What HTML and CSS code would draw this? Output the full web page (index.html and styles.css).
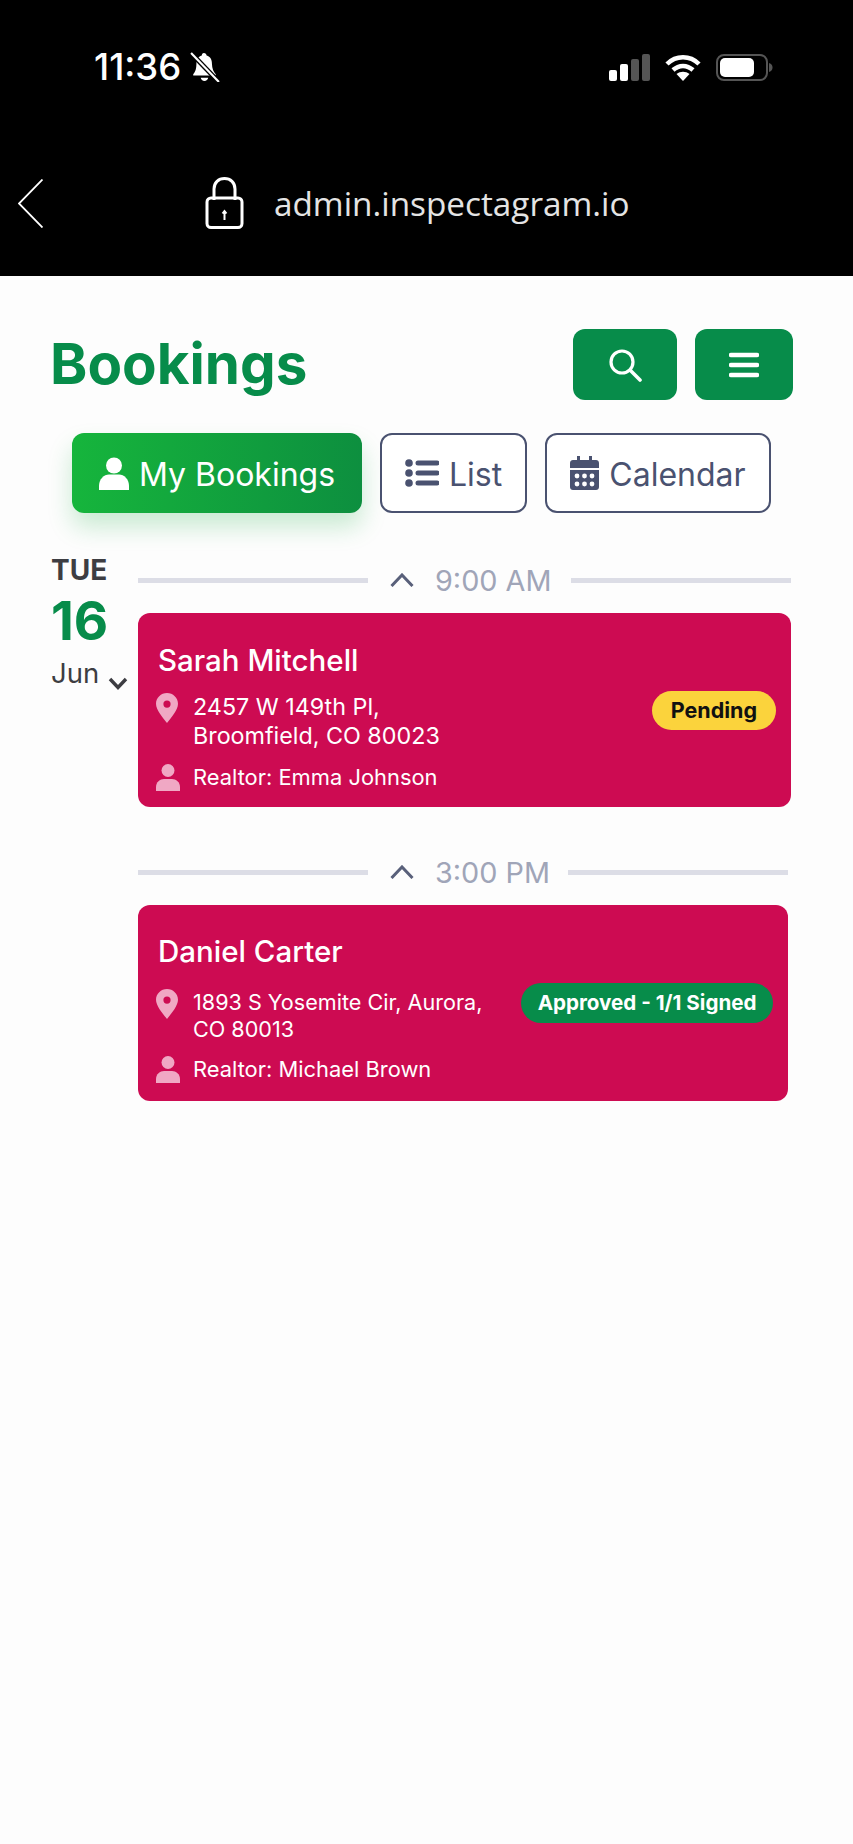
FILE: index.html
```html
<!DOCTYPE html>
<html lang="en">
<head>
    <meta charset="UTF-8">
    <meta name="viewport" content="width=device-width, initial-scale=1.0">
    <title>Bookings</title>
    <link rel="stylesheet" href="styles.css">
</head>
<body>

    <header class="phone-top">
        <div class="status-bar">
            <div class="status-left">
                <span class="clock">11:36</span>
                <svg class="bell" viewBox="0 0 28 28">
                    <path fill="#fff" d="M13 1c1.500 0 2.300 1 2.500 2.300 3.600 1 5 4 5 8 0 4 1.500 7.500 3.500 9.500v1.200H3v-1.200c2-2 3-5.500 3-9.500 0-4 1.400-7 5-8C11.200 2 11.500 1 13 1zM10 24h7c-.3 1.800-1.700 3-3.500 3S10.300 25.800 10 24z"/>
                    <path stroke="#000" stroke-width="4.500" d="M1 1l26 27"/>
                    <path stroke="#fff" stroke-width="2" d="M1 1l26 27"/>
                </svg>
            </div>
            <div class="status-right">
                <svg class="signal" viewBox="0 0 42 27">
                    <rect x="0" y="16" width="8" height="11" rx="2" fill="#fff"/>
                    <rect x="11" y="10" width="8" height="17" rx="2" fill="#fff"/>
                    <rect x="22" y="5" width="8" height="22" rx="2" fill="#555"/>
                    <rect x="33" y="0" width="8" height="27" rx="2" fill="#555"/>
                </svg>
                <svg class="wifi" viewBox="0 0 36 27">
                    <path fill="none" stroke="#fff" stroke-width="4.500" d="M2 10c9-9 23-9 32 0M8 16c6-5.500 14-5.500 20 0"/>
                    <path fill="#fff" d="M18 27l-6.500-7c4-3 9-3 13 0z"/>
                </svg>
                <svg class="battery" viewBox="0 0 57 27">
                    <rect x="1" y="1" width="50" height="25" rx="7" fill="none" stroke="#555" stroke-width="2"/>
                    <rect x="4" y="4" width="34" height="19" rx="5" fill="#fff"/>
                    <path d="M53 9c2.500.5 3.500 2.500 3.500 4.500S55.500 17.500 53 18z" fill="#555"/>
                </svg>
            </div>
        </div>
        <div class="address-bar">
            <svg class="back" viewBox="0 0 25 49">
                <path fill="none" stroke="#fff" stroke-width="1.800" d="M24.500 .5L1 24.500l23.500 24"/>
            </svg>
            <svg class="lock" viewBox="0 0 39 52">
                <path fill="none" stroke="#fff" stroke-width="3" d="M9 23V12C9 5.500 13.500 1.500 19.500 1.500S30 5.500 30 12v11"/>
                <rect x="2" y="21" width="35" height="29.500" rx="4" fill="none" stroke="#fff" stroke-width="3"/>
                <path fill="none" stroke="#fff" stroke-width="2" d="M19.500 43v-9M17.500 36.500l2-2.500 2 2.500"/>
            </svg>
            <span class="url">admin.inspectagram.io</span>
        </div>
    </header>

    <main class="page">
        <div class="title-row">
            <h1>Bookings</h1>
            <div class="title-actions">
                <button class="icon-btn search-btn" type="button">
                    <svg viewBox="0 0 34 34" width="34" height="34">
                        <circle cx="14" cy="14" r="11" fill="none" stroke="#fff" stroke-width="3.200"/>
                        <path d="M22.500 22.500L32 32" stroke="#fff" stroke-width="3.600" stroke-linecap="round"/>
                    </svg>
                </button>
                <button class="icon-btn menu-btn" type="button">
                    <svg viewBox="0 0 30 26" width="30" height="26">
                        <path d="M2 3h26M2 13h26M2 23h26" stroke="#fff" stroke-width="4.400" stroke-linecap="round"/>
                    </svg>
                </button>
            </div>
        </div>

        <div class="tabs">
            <button class="tab tab-active" type="button">
                <svg viewBox="0 0 30 33" width="30" height="33">
                    <circle cx="15" cy="8.500" r="8" fill="#fff"/>
                    <path fill="#fff" d="M0 33v-4c0-7 5-11.500 10-11.500h10c5 0 10 4.500 10 11.500v4z"/>
                </svg>
                My Bookings
            </button>
            <button class="tab tab-list" type="button">
                <svg viewBox="0 0 34 28" width="34" height="28">
                    <circle cx="4" cy="4" r="3.800" fill="#4a5270"/>
                    <circle cx="4" cy="14" r="3.800" fill="#4a5270"/>
                    <circle cx="4" cy="24" r="3.800" fill="#4a5270"/>
                    <path d="M13 4h19M13 14h19M13 24h19" stroke="#4a5270" stroke-width="5" stroke-linecap="round"/>
                </svg>
                List
            </button>
            <button class="tab tab-calendar" type="button">
                <svg viewBox="0 0 29 34" width="29" height="34">
                    <path fill="#4a5270" d="M7 0h3v4h9V0h3v4h4c1.700 0 3 1.300 3 3v5H0V7c0-1.700 1.300-3 3-3h4zM0 14h29v17c0 1.700-1.300 3-3 3H3c-1.700 0-3-1.300-3-3z"/>
                    <g fill="#fff">
                        <circle cx="7" cy="20" r="2.400"/><circle cx="14.500" cy="20" r="2.400"/><circle cx="22" cy="20" r="2.400"/>
                        <circle cx="7" cy="28" r="2.400"/><circle cx="14.500" cy="28" r="2.400"/><circle cx="22" cy="28" r="2.400"/>
                    </g>
                </svg>
                Calendar
            </button>
        </div>

        <div class="schedule">
            <div class="day">
                <div class="day-name">TUE</div>
                <div class="day-num">16</div>
                <div class="day-month">
                    Jun
                    <svg viewBox="0 0 20 13" width="20" height="13">
                        <path d="M2 2l8 8.500L18 2" fill="none" stroke="#3d3d42" stroke-width="3.400"/>
                    </svg>
                </div>
            </div>

            <div class="slots">
                <section class="slot">
                    <div class="slot-time">
                        <span class="slot-line slot-line-left"></span>
                        <svg viewBox="0 0 24 14" width="24" height="14">
                            <path d="M1.500 13L12 2l10.500 11" fill="none" stroke="#59607a" stroke-width="3"/>
                        </svg>
                        <span class="slot-label">9:00 AM</span>
                        <span class="slot-line"></span>
                    </div>
                    <div class="card">
                        <div class="card-info">
                            <h2>Sarah Mitchell</h2>
                            <div class="info-row address">
                                <svg class="pin" viewBox="0 0 22 30" width="22" height="30">
                                    <path fill-rule="evenodd" fill="#f0a8c4" d="M11 0c6 0 11 4.800 11 10.800C22 17 15 25 11 30 7 25 0 17 0 10.800 0 4.800 5 0 11 0zm0 7.500a3.600 3.600 0 1 0 0 7.200 3.600 3.600 0 0 0 0-7.200z"/>
                                </svg>
                                <span>2457 W 149th Pl,<br>Broomfield, CO 80023</span>
                            </div>
                            <div class="info-row realtor">
                                <svg class="person" viewBox="0 0 24 27" width="24" height="27">
                                    <circle cx="12" cy="6.500" r="6.500" fill="#f0a8c4"/>
                                    <path fill="#f0a8c4" d="M0 27v-4c0-5 4-8 8-8h8c4 0 8 3 8 8v4z"/>
                                </svg>
                                <span>Realtor: Emma Johnson</span>
                            </div>
                        </div>
                        <span class="pill pill-pending">Pending</span>
                    </div>
                </section>

                <section class="slot slot-second">
                    <div class="slot-time">
                        <span class="slot-line slot-line-left"></span>
                        <svg viewBox="0 0 24 14" width="24" height="14">
                            <path d="M1.500 13L12 2l10.500 11" fill="none" stroke="#59607a" stroke-width="3"/>
                        </svg>
                        <span class="slot-label">3:00 PM</span>
                        <span class="slot-line"></span>
                    </div>
                    <div class="card">
                        <div class="card-info">
                            <h2>Daniel Carter</h2>
                            <div class="info-row address">
                                <svg class="pin" viewBox="0 0 22 30" width="22" height="30">
                                    <path fill-rule="evenodd" fill="#f0a8c4" d="M11 0c6 0 11 4.800 11 10.800C22 17 15 25 11 30 7 25 0 17 0 10.800 0 4.800 5 0 11 0zm0 7.500a3.600 3.600 0 1 0 0 7.200 3.600 3.600 0 0 0 0-7.200z"/>
                                </svg>
                                <span>1893 S Yosemite Cir, Aurora,<br>CO 80013</span>
                            </div>
                            <div class="info-row realtor">
                                <svg class="person" viewBox="0 0 24 27" width="24" height="27">
                                    <circle cx="12" cy="6.500" r="6.500" fill="#f0a8c4"/>
                                    <path fill="#f0a8c4" d="M0 27v-4c0-5 4-8 8-8h8c4 0 8 3 8 8v4z"/>
                                </svg>
                                <span>Realtor: Michael Brown</span>
                            </div>
                        </div>
                        <span class="pill pill-approved">Approved - 1/1 Signed</span>
                    </div>
                </section>
            </div>
        </div>
    </main>

</body>
</html>
```

FILE: styles.css
```css
body {
    margin: 0;
    min-height: 100vh;
    background-color: #fdfdfd;
    font-family: 'Inter', 'Liberation Sans', sans-serif;
}

h1, h2 {
    margin: 0;
}

button {
    font-family: inherit;
    cursor: pointer;
}

/* black phone chrome */
.phone-top {
    background-color: #000;
    height: 276px;
    box-sizing: border-box;
    padding-top: 53px;
}

.status-bar {
    display: flex;
    justify-content: space-between;
    align-items: center;
    padding: 0 80px 0 94px;
    height: 28px;
}

.status-left,
.status-right {
    display: flex;
    align-items: center;
}

.clock {
    color: #fff;
    font-size: 36.5px;
    font-weight: 500;
}

.bell {
    width: 30px;
    height: 30px;
    margin-left: 9px;
}

.signal {
    width: 42px;
    height: 27px;
}

.wifi {
    width: 36px;
    height: 27px;
    margin-left: 14px;
}

.battery {
    width: 57px;
    height: 27px;
    margin-left: 15px;
}

.address-bar {
    display: flex;
    align-items: center;
    margin-top: 96px;
    padding-left: 18px;
    height: 52px;
}

.back {
    width: 25px;
    height: 49px;
}

.lock {
    width: 39px;
    height: 52px;
    margin-left: 162px;
}

.url {
    color: #e4e4e4;
    font-family: 'Open Sans', sans-serif;
    font-size: 33.3px;
    font-weight: 400;
    margin-left: 30px;
}

/* page */
.page {
    padding: 53px 62px 0 51px;
}

.title-row {
    display: flex;
    justify-content: space-between;
    align-items: center;
    height: 71px;
}

h1 {
    color: #078c4a;
    font-size: 56.5px;
    font-weight: 700;
    margin: -2px 0 0 -1px;
}

.title-actions {
    display: flex;
    gap: 18px;
    margin-right: -2px;
}

.icon-btn {
    display: flex;
    align-items: center;
    justify-content: center;
    height: 71px;
    border: 0;
    border-radius: 12px;
    background-color: #078c4a;
}

.search-btn {
    width: 104px;
}

.menu-btn {
    width: 98px;
}

.tabs {
    display: flex;
    gap: 18px;
    margin-top: 33px;
    padding-left: 21px;
}

.tab {
    display: flex;
    align-items: center;
    justify-content: center;
    gap: 10px;
    height: 80px;
    box-sizing: border-box;
    border: 2px solid #4a5270;
    border-radius: 12px;
    background-color: #fff;
    color: #4a5270;
    font-size: 32px;
    font-weight: 400;
    padding: 2px 0 0;
}

.tab svg {
    margin-top: -2px;
}

.tab-active {
    width: 290px;
    border: 0;
    background: linear-gradient(90deg, #16b53c, #0d8f3f);
    color: #fff;
    box-shadow: 0 14px 24px rgba(20, 170, 60, 0.22);
}

.tab-list {
    width: 147px;
}

.tab-calendar {
    width: 226px;
}

/* schedule */
.schedule {
    display: flex;
    margin-top: 47px;
}

.day {
    width: 87px;
    flex-shrink: 0;
}

.day-name {
    color: #3d3d42;
    font-size: 28px;
    font-weight: 700;
    line-height: 27px;
    margin-top: -3px;
}

.day-num {
    color: #078c4a;
    font-size: 53px;
    font-weight: 700;
    line-height: 50px;
    margin-top: 12px;
}

.day-month {
    display: flex;
    align-items: flex-end;
    gap: 9px;
    color: #3d3d42;
    font-size: 27.5px;
    line-height: 34px;
    margin-top: 10px;
}

.slots {
    flex: 1;
}

.slot-second {
    margin-top: 45px;
    margin-right: 3px;
}

.slot-time {
    display: flex;
    align-items: center;
    height: 40px;
}

.slot-time svg {
    margin-left: 22px;
    flex-shrink: 0;
}

.slot-line {
    flex: 1;
    height: 5px;
    background-color: #dcdde6;
}

.slot-line-left {
    flex: none;
    width: 230px;
}

.slot-label {
    color: #a0a5b8;
    font-size: 28.8px;
    margin: 0 20px 0 21px;
}

.slot-second .slot-label {
    margin-right: 18px;
}

.card {
    display: flex;
    align-items: center;
    justify-content: space-between;
    margin-top: 13px;
    padding: 0 15px 0 18px;
    border-radius: 12px;
    background-color: #cd0b52;
    color: #fff;
}

.card-info {
    padding: 29px 0 15.5px;
}

.slot-second .card-info {
    padding: 27.5px 0 17.5px;
}

.card h2 {
    font-size: 29.5px;
    font-weight: 500;
    line-height: 36px;
    padding-left: 2px;
}

.info-row {
    display: flex;
    gap: 15px;
    align-items: flex-start;
    font-size: 23.3px;
    line-height: 28.5px;
}

.address {
    margin-top: 15px;
}

.realtor {
    gap: 13px;
    margin-top: 13px;
    font-size: 21.9px;
    align-items: center;
}

.slot-second .address {
    margin-top: 20.5px;
    font-size: 21.6px;
    line-height: 27px;
}

.slot-second .realtor {
    margin-top: 12px;
}

.pill {
    border-radius: 20px;
    font-size: 21.5px;
    font-weight: 700;
    line-height: 39px;
    padding: 0 19px;
    white-space: nowrap;
}

.pill-pending {
    background-color: #fbd33c;
    color: #111;
}

.pill-approved {
    background-color: #078c4a;
    color: #fff;
    font-size: 20.6px;
    line-height: 40px;
    padding: 0 16.5px;
}
```
